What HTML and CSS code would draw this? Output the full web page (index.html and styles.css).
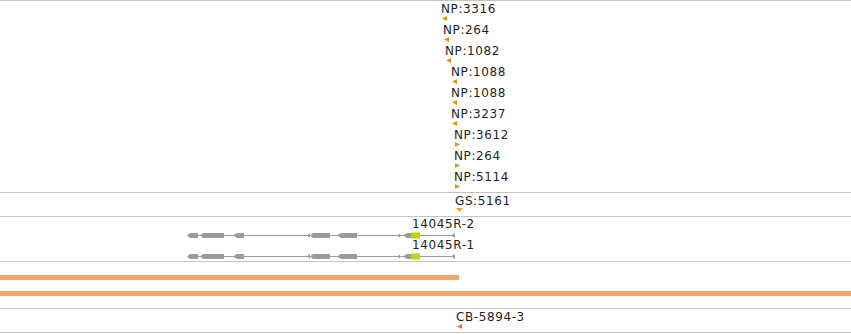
FILE: index.html
```html
<!DOCTYPE html>
<html lang="en">
<head>
    <meta charset="UTF-8">
    <title>Track View</title>
    <link rel="stylesheet" href="styles.css">
</head>
<body>
    <div class="tracks">
        <!-- NP feature track -->
        <div class="track track-np">
            <div class="feat" style="left:441px;top:0px"><span class="label">NP:3316</span><svg class="arrow np" width="5" height="5"><polygon points="0,2.5 5,0 5,5"/></svg></div>
            <div class="feat" style="left:443px;top:21px"><span class="label">NP:264</span><svg class="arrow np" width="5" height="5"><polygon points="0,2.5 5,0 5,5"/></svg></div>
            <div class="feat" style="left:445px;top:42px"><span class="label">NP:1082</span><svg class="arrow np" width="5" height="5"><polygon points="0,2.5 5,0 5,5"/></svg></div>
            <div class="feat" style="left:451px;top:63px"><span class="label">NP:1088</span><svg class="arrow np" width="5" height="5"><polygon points="0,2.5 5,0 5,5"/></svg></div>
            <div class="feat" style="left:451px;top:84px"><span class="label">NP:1088</span><svg class="arrow np" width="5" height="5"><polygon points="0,2.5 5,0 5,5"/></svg></div>
            <div class="feat" style="left:451px;top:105px"><span class="label">NP:3237</span><svg class="arrow np" width="5" height="5"><polygon points="0,2.5 5,0 5,5"/></svg></div>
            <div class="feat" style="left:454px;top:126px"><span class="label">NP:3612</span><svg class="arrow np" width="5" height="5"><polygon points="0,0 5,2.5 0,5"/></svg></div>
            <div class="feat" style="left:454px;top:147px"><span class="label">NP:264</span><svg class="arrow np" width="5" height="5"><polygon points="0,0 5,2.5 0,5"/></svg></div>
            <div class="feat" style="left:454px;top:168px"><span class="label">NP:5114</span><svg class="arrow np" width="5" height="5"><polygon points="0,0 5,2.5 0,5"/></svg></div>
        </div>

        <!-- GS track -->
        <div class="track track-gs">
            <div class="feat gs" style="left:455px;top:0px"><span class="label">GS:5161</span><svg class="arrow gs-arrow" width="7" height="4"><polygon points="0,0 7,0 3.5,4"/></svg></div>
        </div>

        <!-- gene models -->
        <div class="track track-genes">
            <div class="feat gene" style="left:187px;top:-1px">
                <span class="label gene-label">14045R-2</span>
                <svg class="gene-model" width="268" height="7">
                    <line x1="11" y1="3.5" x2="268" y2="3.5"/>
                    <polygon class="exon" points="0,3.5 3,1 11,1 11,6 3,6"/>
                    <polygon class="exon" points="13,3.5 16,1 37,1 37,6 16,6"/>
                    <polygon class="exon" points="46,3.5 50,1 57,1 57,6 50,6"/>
                    <polygon class="exon" points="120,3.5 123,1 123,6"/>
                    <polygon class="exon" points="123,3.5 126,1 143,1 143,6 126,6"/>
                    <polygon class="exon" points="150,3.5 154,1 170,1 170,6 154,6"/>
                    <polygon class="exon" points="210,3.5 213,1.5 213,5.5"/>
                    <polygon class="exon" points="216,3.5 220,1 224,1 224,6 220,6"/>
                    <rect class="cds" x="224" y="0.5" width="9" height="6"/>
                    <polygon class="exon" points="264,3.5 268,1 268,6"/>
                </svg>
            </div>
            <div class="feat gene" style="left:187px;top:20px">
                <span class="label gene-label">14045R-1</span>
                <svg class="gene-model" width="268" height="7">
                    <line x1="11" y1="3.5" x2="268" y2="3.5"/>
                    <polygon class="exon" points="0,3.5 3,1 11,1 11,6 3,6"/>
                    <polygon class="exon" points="13,3.5 16,1 37,1 37,6 16,6"/>
                    <polygon class="exon" points="46,3.5 50,1 57,1 57,6 50,6"/>
                    <polygon class="exon" points="120,3.5 123,1 123,6"/>
                    <polygon class="exon" points="123,3.5 126,1 143,1 143,6 126,6"/>
                    <polygon class="exon" points="150,3.5 154,1 170,1 170,6 154,6"/>
                    <polygon class="exon" points="210,3.5 213,1.5 213,5.5"/>
                    <polygon class="exon" points="216,3.5 220,1 224,1 224,6 220,6"/>
                    <rect class="cds" x="224" y="0.5" width="9" height="6"/>
                    <polygon class="exon" points="264,3.5 268,1 268,6"/>
                </svg>
            </div>
        </div>

        <!-- coverage bars -->
        <div class="track track-bars">
            <div class="bar" style="width:459px"></div>
            <div class="bar bar-full"></div>
        </div>

        <!-- CB track -->
        <div class="track track-cb">
            <div class="feat" style="left:456px;top:0px"><span class="label">CB-5894-3</span><svg class="arrow cb" width="5" height="5"><polygon points="0,2.5 5,0 5,5"/></svg></div>
        </div>
    </div>
</body>
</html>
```

FILE: styles.css
```css
body {
    margin: 0;
    background-color: #fff;
    font-family: "DejaVu Sans", Verdana, sans-serif;
    font-size: 12px;
    color: #1e1e1e;
    overflow: hidden;
}
.tracks {
    width: 851px;
}
.track {
    position: relative;
    border-top: 1px solid #c4c4c4;
}
.track-np {
    height: 191px;
}
.track-gs {
    height: 23px;
}
.track-genes {
    height: 44px;
}
.track-bars {
    height: 47px;
    display: flex;
    flex-direction: column;
    padding-top: 13px;
    gap: 11px;
    box-sizing: border-box;
}
.track-cb {
    height: 23px;
    border-bottom: 1px solid #c4c4c4;
}
.feat {
    position: absolute;
    display: flex;
    flex-direction: column;
    align-items: flex-start;
}
.label {
    line-height: 13px;
    padding-top: 2px;
    letter-spacing: 0.6px;
    white-space: nowrap;
}
.arrow {
    display: block;
    margin-left: 1px;
}
.np {
    fill: #d89a0c;
}
.gs-arrow {
    fill: #f6a526;
}
.cb {
    fill: #f2683a;
}
.gene-label {
    margin-left: 225px;
}
.gene-model {
    display: block;
    margin-top: 1px;
}
.gene-model line {
    stroke: #9d9d9d;
    stroke-width: 1;
}
.exon {
    fill: #9b9b9b;
}
.cds {
    fill: #c6d300;
}
.bar {
    height: 5px;
    background-color: #f4a470;
}
.bar-full {
    width: 100%;
}
```
